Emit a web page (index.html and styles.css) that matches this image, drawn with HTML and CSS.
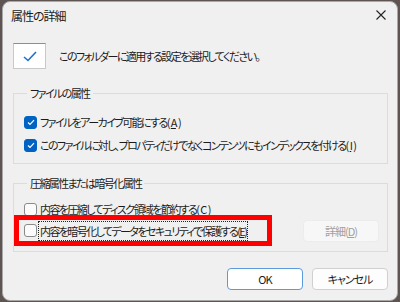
FILE: index.html
```html
<!DOCTYPE html>
<html lang="ja">
  <head>
    <meta charset="UTF-8" />
    <title>属性の詳細</title>
    <link rel="stylesheet" href="styles.css">
  </head>
  <body>
    <div class="dialog">
      <div class="titlebar">
        <span class="title">属性の詳細</span>
        <span class="close">
          <svg width="10" height="10" viewBox="0 0 10 10">
            <path d="M0.5 0.5 L9.5 9.5 M9.5 0.5 L0.5 9.5" stroke="#222" stroke-width="1.1" fill="none" />
          </svg>
        </span>
      </div>

      <div class="intro">
        <div class="intro-icon">
          <svg width="14" height="11" viewBox="0 0 14 11">
            <path d="M1 6 L5 9.5 L13 1" stroke="#1f6fd1" stroke-width="1.6" fill="none" />
          </svg>
        </div>
        <p>このフォルダーに適用する設定を選択してください。</p>
      </div>

      <fieldset class="group group-file">
        <legend>ファイルの属性</legend>
        <label class="option">
          <span class="box checked">
            <svg width="8" height="7" viewBox="0 0 8 7"><path d="M1 3.5 L3 5.5 L7 1.2" stroke="#fff" stroke-width="1.2" fill="none" /></svg>
          </span>
          ファイルをアーカイブ可能にする(<u>A</u>)
        </label>
        <label class="option">
          <span class="box checked">
            <svg width="8" height="7" viewBox="0 0 8 7"><path d="M1 3.5 L3 5.5 L7 1.2" stroke="#fff" stroke-width="1.2" fill="none" /></svg>
          </span>
          このファイルに対し、プロパティだけでなくコンテンツにもインデックスを付ける(<u>I</u>)
        </label>
      </fieldset>

      <fieldset class="group group-crypt">
        <legend>圧縮属性または暗号化属性</legend>
        <label class="option option-compress">
          <span class="box"></span>
          内容を圧縮してディスク領域を節約する(<u>C</u>)
        </label>
        <div class="encrypt-row">
          <div class="highlight">
            <label class="option">
              <span class="box"></span>
              <span class="focus">内容を暗号化してデータをセキュリティで保護する(<u>E</u>)</span>
            </label>
          </div>
          <button class="btn btn-detail" disabled>詳細(<u>D</u>)</button>
        </div>
      </fieldset>

      <div class="actions">
        <button class="btn btn-ok">OK</button>
        <button class="btn">キャンセル</button>
      </div>
    </div>
  </body>
</html>
```

FILE: styles.css
```css
body {
  margin: 0;
  width: 400px;
  height: 302px;
  background-color: #5e5552;
  font-family: "Noto Sans CJK JP", "Noto Sans", sans-serif;
  font-size: 11px;
  letter-spacing: -1.6px;
  font-feature-settings: "palt";
  color: #1b1b1b;
  overflow: hidden;
}

.dialog {
  box-sizing: border-box;
  width: 396px;
  height: 300px;
  margin: 1px 0 0 2px;
  background-color: #f0f0f0;
  border: 1px solid #a8a8a8;
  border-radius: 8px;
  padding: 0 9px 0 10px;
}

.titlebar {
  display: flex;
  justify-content: space-between;
  align-items: center;
  height: 27px;
}

.title {
  margin-left: -2px;
  font-size: 12px;
  letter-spacing: -1px;
}

.close {
  display: flex;
  margin-right: 2px;
  margin-top: -2px;
}

.intro {
  display: flex;
  align-items: center;
  gap: 13px;
  margin-top: 14px;
  height: 26px;
}

.intro-icon {
  box-sizing: border-box;
  width: 33px;
  height: 26px;
  background-color: #fff;
  border: 1px solid #c9c9c9;
  border-top-color: #8e8e8e;
  display: flex;
  align-items: center;
  justify-content: center;
}

.intro p {
  margin: 0;
}

.group {
  margin: 0;
  padding: 0 10px;
  border: 1px solid #dcdcdc;
  min-width: 0;
}

.group legend {
  padding: 0 3px;
  margin-left: 3px;
  line-height: 16px;
}

.group-file {
  margin-top: 16px;
  padding-top: 11px;
  padding-bottom: 8px;
  display: flex;
  flex-direction: column;
  gap: 3px;
}

.group-crypt {
  margin-top: 11px;
  padding-top: 10px;
  padding-bottom: 5px;
}

.option {
  display: flex;
  align-items: center;
  gap: 2px;
  height: 20px;
  white-space: nowrap;
}

.option-compress {
  height: 16px;
  margin-bottom: -2px;
}

.box {
  box-sizing: border-box;
  display: flex;
  align-items: center;
  justify-content: center;
  width: 13px;
  height: 13px;
  margin-right: 1px;
  border: 1px solid #8a8a8a;
  border-radius: 3px;
  background-color: #fbfbfb;
}

.box.checked {
  background-color: #0063c4;
  border-color: #0063c4;
}

.encrypt-row {
  display: flex;
  align-items: center;
  justify-content: space-between;
}

.highlight {
  box-sizing: border-box;
  width: 258px;
  height: 31px;
  margin-left: -10px;
  padding-left: 5px;
  border: 5px solid #ff0000;
  display: flex;
  align-items: center;
}

.focus {
  outline: 1px dotted #222;
  outline-offset: 1px;
}

.btn {
  box-sizing: border-box;
  height: 22px;
  width: 76px;
  font-family: inherit;
  font-size: 11px;
  letter-spacing: -1px;
  font-feature-settings: "palt";
  color: #1b1b1b;
  background-color: #fdfdfd;
  border: 1px solid #d0d0d0;
  border-radius: 4px;
  padding: 0;
}

.btn-detail {
  margin-right: -2px;
  color: #a0a0a0;
  background-color: #f7f7f7;
  border-color: #ececec;
}

.btn-ok {
  border-color: #5b9bdc;
  background-color: #fff;
}

.actions {
  display: flex;
  justify-content: flex-end;
  gap: 9px;
  margin-top: 16px;
}
```
